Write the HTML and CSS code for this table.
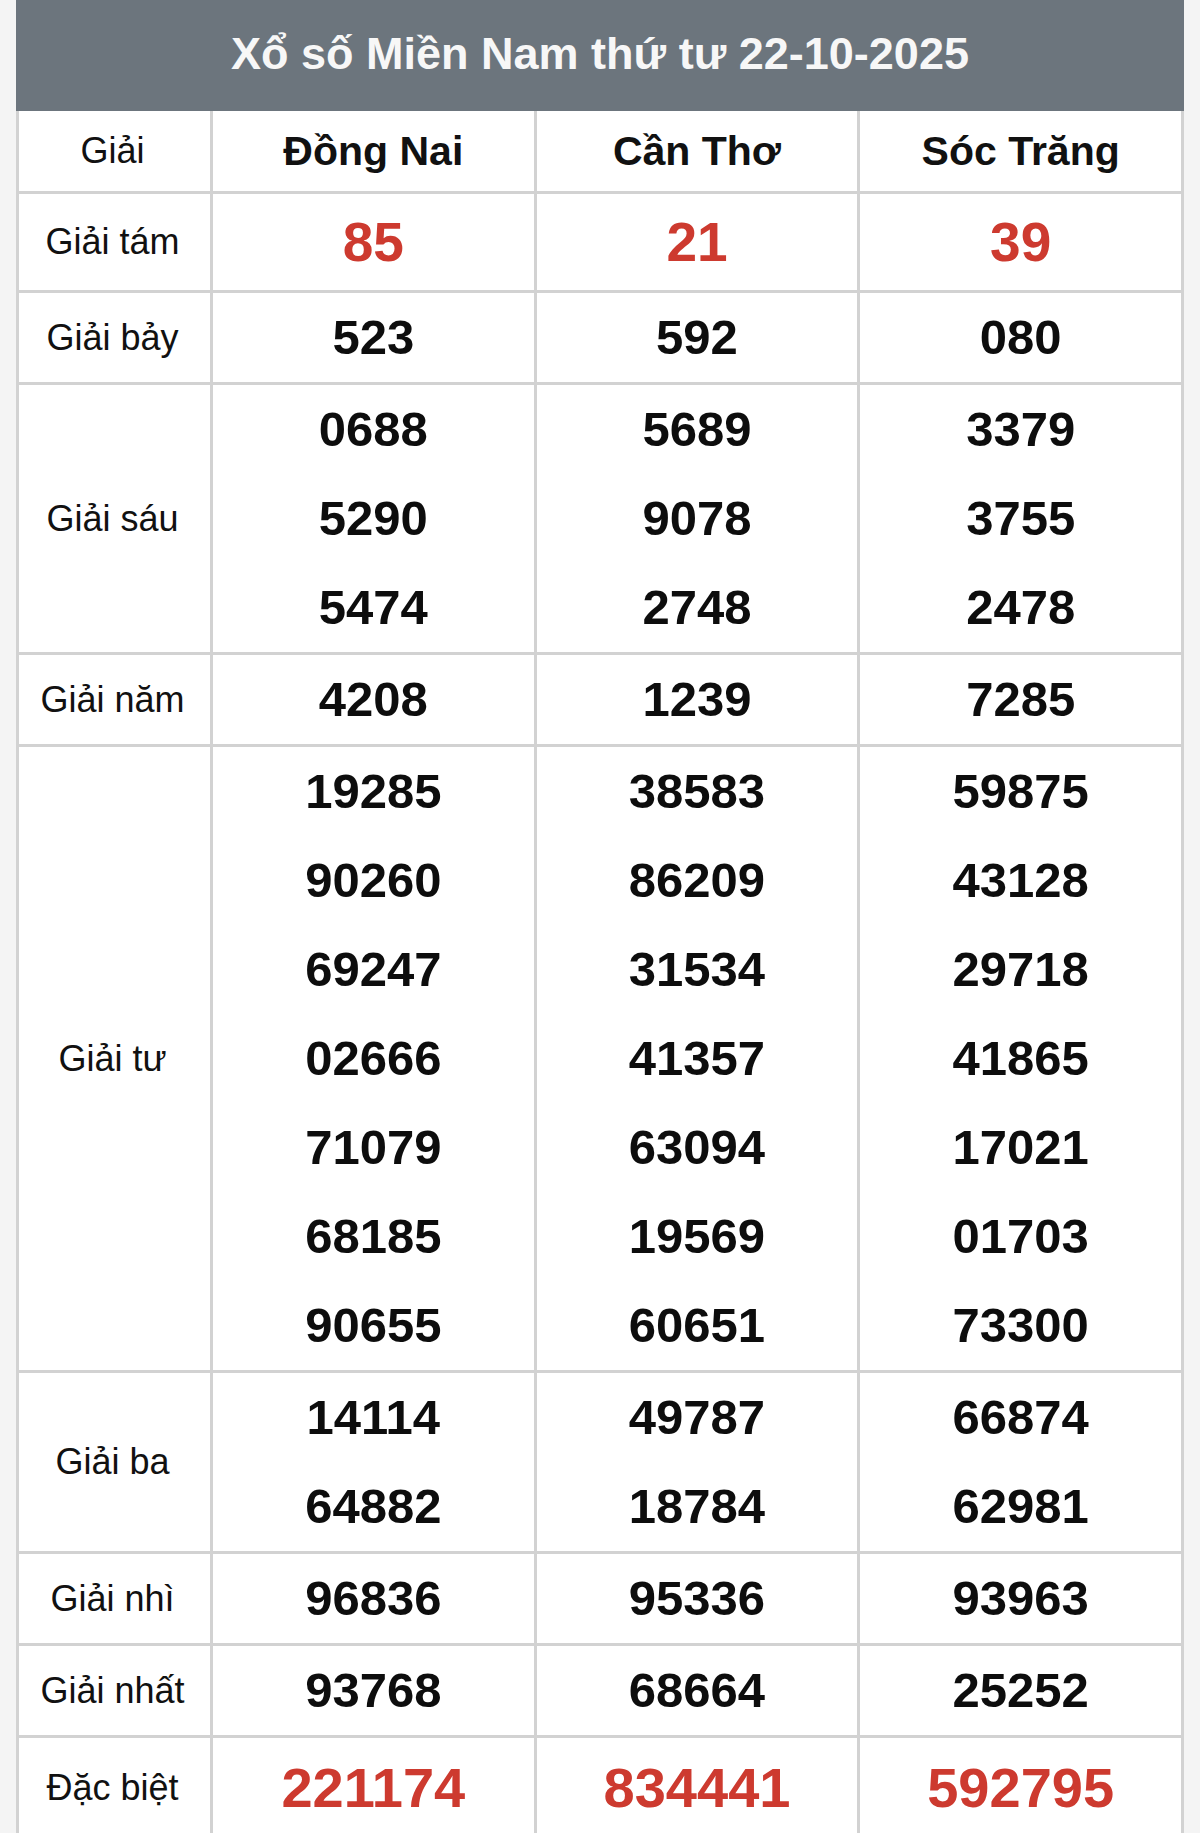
FILE: index.html
```html
<!DOCTYPE html>
<html lang="vi">
<head>
<meta charset="utf-8">
<title>Xổ số Miền Nam thứ tư 22-10-2025</title>
<link rel="stylesheet" href="styles.css">
</head>
<body>
<div class="page">
  <div class="sheet">
    <div class="title">Xổ số Miền Nam thứ tư 22-10-2025</div>
    <table class="results">
      <colgroup>
        <col class="c-label"><col class="c-prov"><col class="c-prov"><col class="c-prov">
      </colgroup>
      <thead>
        <tr class="head">
          <th class="label">Giải</th>
          <th>Đồng Nai</th>
          <th>Cần Thơ</th>
          <th>Sóc Trăng</th>
        </tr>
      </thead>
      <tbody>
        <tr class="big">
          <td class="label">Giải tám</td>
          <td><div class="num red">85</div></td>
          <td><div class="num red">21</div></td>
          <td><div class="num red">39</div></td>
        </tr>
        <tr>
          <td class="label">Giải bảy</td>
          <td><div class="num">523</div></td>
          <td><div class="num">592</div></td>
          <td><div class="num">080</div></td>
        </tr>
        <tr>
          <td class="label">Giải sáu</td>
          <td><div class="num">0688</div><div class="num">5290</div><div class="num">5474</div></td>
          <td><div class="num">5689</div><div class="num">9078</div><div class="num">2748</div></td>
          <td><div class="num">3379</div><div class="num">3755</div><div class="num">2478</div></td>
        </tr>
        <tr>
          <td class="label">Giải năm</td>
          <td><div class="num">4208</div></td>
          <td><div class="num">1239</div></td>
          <td><div class="num">7285</div></td>
        </tr>
        <tr>
          <td class="label">Giải tư</td>
          <td><div class="num">19285</div><div class="num">90260</div><div class="num">69247</div><div class="num">02666</div><div class="num">71079</div><div class="num">68185</div><div class="num">90655</div></td>
          <td><div class="num">38583</div><div class="num">86209</div><div class="num">31534</div><div class="num">41357</div><div class="num">63094</div><div class="num">19569</div><div class="num">60651</div></td>
          <td><div class="num">59875</div><div class="num">43128</div><div class="num">29718</div><div class="num">41865</div><div class="num">17021</div><div class="num">01703</div><div class="num">73300</div></td>
        </tr>
        <tr>
          <td class="label">Giải ba</td>
          <td><div class="num">14114</div><div class="num">64882</div></td>
          <td><div class="num">49787</div><div class="num">18784</div></td>
          <td><div class="num">66874</div><div class="num">62981</div></td>
        </tr>
        <tr>
          <td class="label">Giải nhì</td>
          <td><div class="num">96836</div></td>
          <td><div class="num">95336</div></td>
          <td><div class="num">93963</div></td>
        </tr>
        <tr>
          <td class="label">Giải nhất</td>
          <td><div class="num">93768</div></td>
          <td><div class="num">68664</div></td>
          <td><div class="num">25252</div></td>
        </tr>
        <tr class="special">
          <td class="label">Đặc biệt</td>
          <td><div class="num red">221174</div></td>
          <td><div class="num red">834441</div></td>
          <td><div class="num red">592795</div></td>
        </tr>
      </tbody>
    </table>
  </div>
</div>
</body>
</html>
```

FILE: styles.css
```css
html, body {
  margin: 0;
  padding: 0;
  background: #f4f4f4;
}

body {
  font-family: "Liberation Sans", Arial, sans-serif;
  color: #111;
}

.page {
  padding: 0 16px;
}

.sheet {
  background: #fff;
}

.title {
  height: 111px;
  background: #6c757d;
  color: #f7f7f7;
  font-weight: 700;
  font-size: 45px;
  display: flex;
  align-items: center;
  justify-content: center;
  padding-bottom: 4px;
  box-sizing: border-box;
}

.results {
  width: 100%;
  border-collapse: collapse;
  table-layout: fixed;
  background: #fff;
}

.c-label { width: 194px; }

.results th,
.results td {
  border: 3px solid #d2d2d2;
  text-align: center;
  vertical-align: middle;
  padding: 0;
}

.results tr:first-child th { border-top: none; }

.head th {
  height: 80px;
  font-size: 41px;
  font-weight: 700;
  color: #111;
}

.head th.label,
.results td.label {
  font-weight: 400;
  font-size: 36px;
  color: #111;
  padding-right: 4px;
}

.num {
  font-size: 49px;
  font-weight: 700;
  line-height: 89px;
  color: #0d0d0d;
}

.big .num {
  font-size: 55px;
  line-height: 96px;
}

.special .num {
  font-size: 56px;
  line-height: 100px;
}

.num.red {
  color: #cd3a2f;
}
```
